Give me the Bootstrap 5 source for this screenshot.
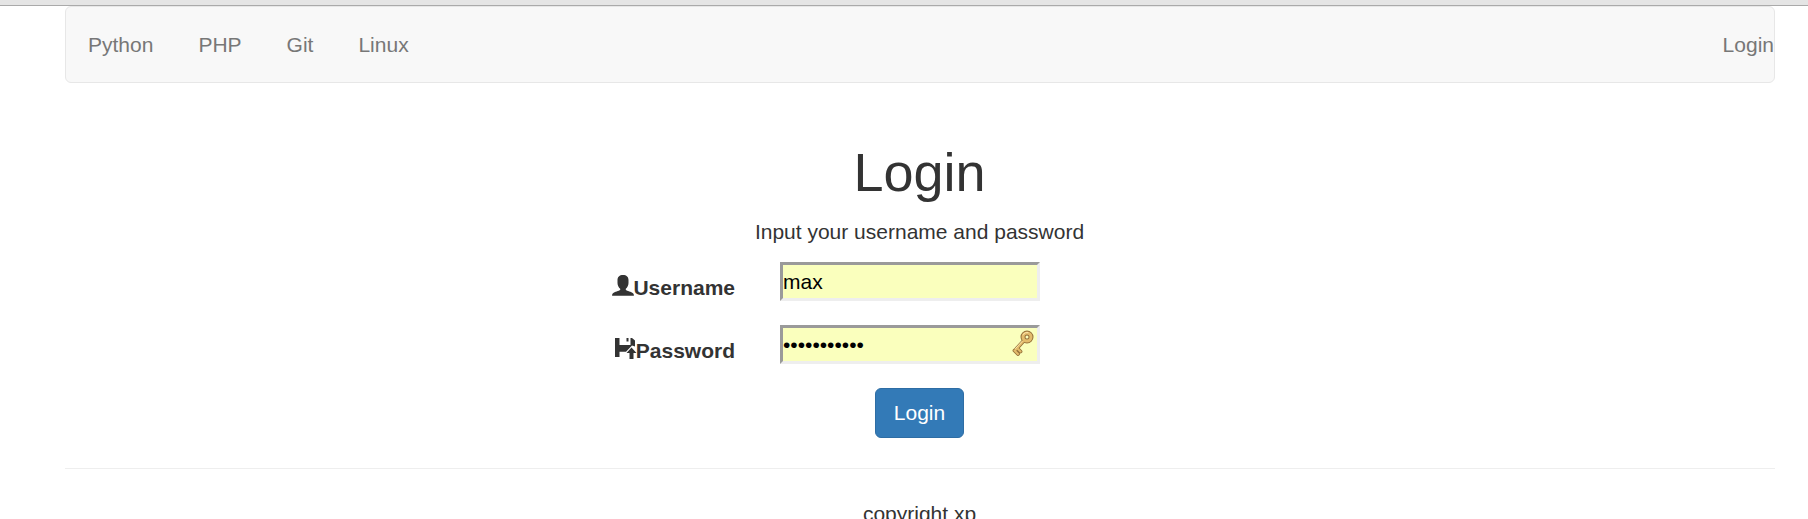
<!DOCTYPE html>
<html lang="en">
<head>
<meta charset="utf-8">
<title>Login</title>
<link href="https://cdn.jsdelivr.net/npm/bootstrap@5.3.0/dist/css/bootstrap.min.css" rel="stylesheet">
<style>
html, body { height: 519px; overflow: hidden; }
body { font: 21px/30px "Liberation Sans", Arial, sans-serif; color: #333; background: #fff; }
.top-strip { height: 6px; background: #e5e5e5; border-bottom: 1px solid #aaa; }
.page { width: 1710px; margin-left: 65px; }
.site-nav { height: 77px; padding: 0; background: #f8f8f8; border: 1px solid #e7e7e7; border-radius: 6px; }
.site-nav .navbar-nav .nav-link { color: #777; padding: 0 22.5px; font-size: 21px; line-height: 30px; }
.site-nav .navbar-nav:first-child { margin-left: -.5px; }
.site-nav .navbar-nav .nav-login { padding-right: 0; }
.page h1 { font-size: 54px; line-height: 59px; margin: 60px 1px 15px 0; font-weight: 400; }
.page p { margin: 0 1px 0 0; }
.login-row { height: 39px; }
.login-row label { width: 670px; padding-top: 11px; font-weight: 700; flex: none; }
.login-row label svg { width: 22px; height: 22px; flex: none; margin: 2px -1px 0 0; }
.login-row .field { margin-left: 45px; width: 260px; height: 39px; position: relative; }
.field input { display: block; width: 100%; height: 39px; border: 3px solid; border-color: #9a9a9a #eee #eee #9a9a9a; border-radius: 0; padding: 0; background: #faffbd; color: #000; font-size: 21px; outline: none; }
.field svg { position: absolute; right: 5px; top: 5px; width: 24px; height: 26px; }
.btn-login { --bs-btn-bg: #337ab7; --bs-btn-border-color: #2e6da4; --bs-btn-color: #fff; width: 89px; height: 50px; margin-left: 810px; padding: 0; font-size: 21px; line-height: 30px; border-radius: 6px; }
.page hr { margin: 30px 0; border-top: 1px solid #eee; opacity: 1; }
.page footer { margin-right: 1px; }
</style>
</head>
<body>
<div class="top-strip"></div>
<div class="page">
  <nav class="navbar navbar-expand site-nav d-flex justify-content-between align-items-center">
    <div class="navbar-nav">
      <a class="nav-link" href="#">Python</a>
      <a class="nav-link" href="#">PHP</a>
      <a class="nav-link" href="#">Git</a>
      <a class="nav-link" href="#">Linux</a>
    </div>
    <div class="navbar-nav"><a class="nav-link nav-login" href="#">Login</a></div>
  </nav>
  <main class="text-center">
    <h1>Login</h1>
    <p>Input your username and password</p>
    <form>
      <div class="login-row d-flex text-start" style="margin-top:15px">
        <label for="user" class="d-flex justify-content-end"><svg viewBox="0 0 22 22" fill="#333"><path d="M11 0C7.500 0 5.500 2 5.500 5v3c0 2.500 1.200 4.500 2.700 5.700v1.300C7 16 2.500 16.800 1 18.200c-.7.600-.9 1.500-.9 2.600h21.800c0-1.100-.2-2-.9-2.600-1.500-1.400-6-2.200-7.200-3.200v-1.300C15.300 12.500 16.500 10.500 16.500 8V5c0-3-2-5-5.500-5z"/></svg>Username</label>
        <div class="field"><input id="user" type="text" value="max"></div>
      </div>
      <div class="login-row d-flex text-start" style="margin-top:24px">
        <label for="pass" class="d-flex justify-content-end"><svg viewBox="0 0 22 22" fill="#333"><path d="M0 0h4.500v7h11V0h1.500L20 2.500V8.500L17 7.500 11 13.700H4.500V19H0z"/><path d="M11.500 0h2v3.500h-2zM16.500 9.500l5 5.500h-3v6h-4v-6h-3z"/></svg>Password</label>
        <div class="field"><input id="pass" type="password" value="xxxxxxxxxxx">
          <svg viewBox="0 0 24 26" fill="none" stroke-linecap="round" stroke-linejoin="round"><g stroke="#94703a"><circle cx="16" cy="7" r="4" stroke-width="5"/><path d="M12.500 11L4 20.500M6 18l3.500 3.500M3.500 20.500L7 24" stroke-width="3.800"/></g><g stroke="#e3bc6c"><circle cx="16" cy="7" r="4" stroke-width="3"/><path d="M12.500 11L4 20.500M6 18l3.500 3.500M3.500 20.500L7 24" stroke-width="2"/></g><path d="M12 4.500q2-2.700 5-2M11 11.500l-6.500 7" stroke="#ffe7ad"/></svg>
        </div>
      </div>
      <button type="button" class="btn btn-login d-block" style="margin-top:24px">Login</button>
    </form>
    <hr>
    <footer>copyright xp</footer>
  </main>
</div>
<script src="https://cdn.jsdelivr.net/npm/bootstrap@5.3.0/dist/js/bootstrap.bundle.min.js"></script>
</body>
</html>
